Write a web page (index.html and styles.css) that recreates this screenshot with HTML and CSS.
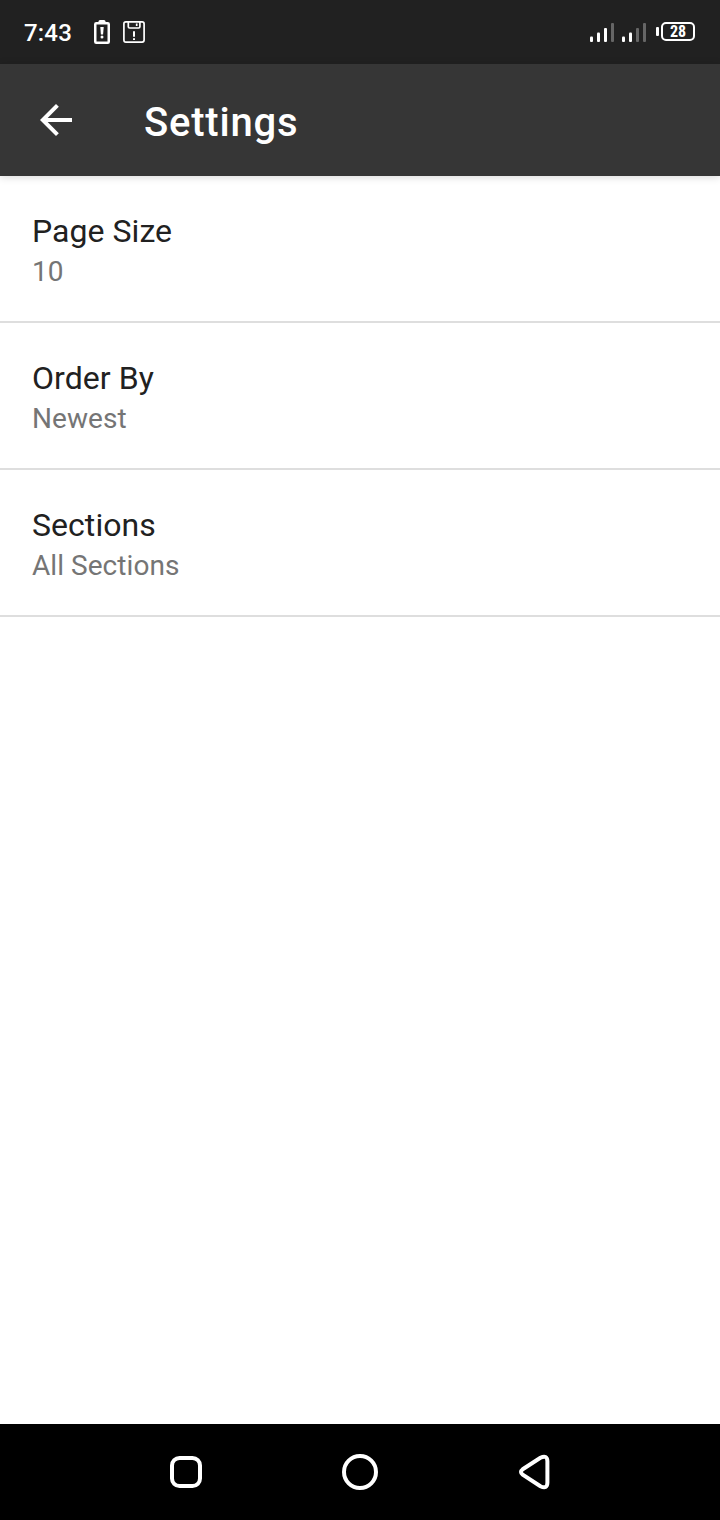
FILE: index.html
```html
<!DOCTYPE html>
<html lang="en">
<head>
<meta charset="utf-8">
<title>Settings</title>
<link rel="stylesheet" href="styles.css">
</head>
<body>
<div class="screen">
  <div class="status-bar">
    <span class="clock">7:43</span>
    <svg class="battery-alert" width="16" height="24" viewBox="0 0 16 24" fill="none">
      <rect x="1.250" y="3.250" width="13.500" height="19.500" rx="1" stroke="#fff" stroke-width="2.500"/>
      <path d="M4.500 3V1.500Q4.500 0 6 0h4Q11.500 0 11.500 1.500V3z" fill="#fff"/>
      <path d="M6.300 7h3.400l-.6 7.500h-2.200z" fill="#fff"/>
      <circle cx="8" cy="17" r="1.500" fill="#fff"/>
    </svg>
    <svg class="disk-alert" width="22" height="22" viewBox="0 0 22 22" fill="none" stroke="#fff" stroke-width="1.700">
      <rect x=".9" y=".9" width="20.200" height="20.200" rx="2"/>
      <path d="M5.300 1v4.700q0 1.300 1.300 1.300h9q1.300 0 1.300-1.300V1M13.700 2.600v2.400"/>
      <path d="M11 10.300v5.400M11 17.300v1.700" stroke-width="2"/>
    </svg>
    <svg class="signal" width="24" height="20" viewBox="0 0 24 20" fill="#fff">
      <rect x="0" y="14.500" width="3" height="5.500" rx="1"/>
      <rect x="7" y="10.500" width="3" height="9.500" rx="1"/>
      <rect x="14" y="6" width="3" height="14" rx="1"/>
      <rect x="21" y="1" width="3" height="19" rx="1" fill="#666"/>
    </svg>
    <svg class="signal signal-second" width="24" height="20" viewBox="0 0 24 20" fill="#fff">
      <rect x="0" y="14.500" width="3" height="5.500" rx="1"/>
      <rect x="7" y="10.500" width="3" height="9.500" rx="1"/>
      <rect x="14" y="6" width="3" height="14" rx="1" fill="#666"/>
      <rect x="21" y="1" width="3" height="19" rx="1" fill="#666"/>
    </svg>
    <div class="battery"><span class="battery-tip"></span><span class="battery-level">28</span></div>
  </div>
  <header class="app-bar">
    <svg width="48" height="48" viewBox="0 0 24 24" fill="#fff"><path d="M20 11H7.830l5.590-5.590L12 4l-8 8 8 8 1.410-1.410L7.830 13H20v-2z"/></svg>
    <h1 class="title">Settings</h1>
  </header>
  <main class="settings">
    <div class="setting"><div class="setting-name">Page Size</div><div class="setting-value">10</div></div>
    <div class="setting"><div class="setting-name">Order By</div><div class="setting-value">Newest</div></div>
    <div class="setting"><div class="setting-name">Sections</div><div class="setting-value">All Sections</div></div>
  </main>
  <nav class="nav-bar">
    <svg width="36" height="36" viewBox="0 0 36 36"><rect x="4" y="4" width="28" height="28" rx="7.500"/></svg>
    <svg width="36" height="36" viewBox="0 0 36 36"><circle cx="18" cy="18" r="16"/></svg>
    <svg width="36" height="36" viewBox="0 0 36 36"><path d="M6.700 15.300 24.400 3.800Q31.200 .5 31.400 7.200V28.800Q31.200 35.500 24.400 32.200L6.700 20.700Q3.300 18 6.700 15.300z"/></svg>
  </nav>
</div>
</body>
</html>
```
FILE: styles.css
```css
body {
  margin: 0;
  font-family: Roboto, sans-serif;
}

.screen {
  display: flex;
  flex-direction: column;
  width: 720px;
  height: 1520px;
  background: #fff;
}

.status-bar {
  display: flex;
  align-items: center;
  box-sizing: border-box;
  height: 64px;
  padding: 0 25px 0 24px;
  background: #212121;
  color: #fff;
}

.clock {
  width: 70px;
  padding-top: 2px;
  font-size: 24px;
  line-height: 28px;
  font-weight: 500;
  letter-spacing: 0.2px;
}

.disk-alert {
  margin-left: 13px;
}

.signal {
  margin: 0 0 0 auto;
}

.signal-second {
  margin-left: 8px;
}

.battery {
  display: flex;
  align-items: center;
  margin: 0 0 1px 10px;
}

.battery-tip {
  width: 3px;
  height: 9px;
  margin-right: 2px;
  border-radius: 1px;
  background: #fff;
}

.battery-level {
  box-sizing: border-box;
  width: 34px;
  height: 19px;
  border: 2px solid #fff;
  border-radius: 5px;
  font: 700 16px/15px "Roboto Condensed", Roboto, sans-serif;
  text-align: center;
}

.app-bar {
  display: flex;
  align-items: center;
  box-sizing: border-box;
  height: 112px;
  padding-left: 32px;
  background: #363636;
  color: #fff;
  box-shadow: 0 1px 8px rgba(0, 0, 0, 0.16);
}

.title {
  margin: 6px 0 0 64px;
  font-size: 40px;
  line-height: 48px;
  font-weight: 500;
  letter-spacing: 0.8px;
}

.settings {
  flex: 1;
}

.setting {
  box-sizing: border-box;
  height: 147px;
  padding: 36px 32px 0;
  border-bottom: 2px solid #dedede;
}

.setting-name {
  color: #212121;
  font-size: 32px;
  line-height: 38px;
  letter-spacing: 0.05px;
}

.setting-value {
  margin-top: 5px;
  color: #757575;
  font-size: 28px;
  line-height: 34px;
  letter-spacing: 0.05px;
}

.nav-bar {
  display: flex;
  align-items: center;
  gap: 138px;
  box-sizing: border-box;
  height: 96px;
  padding-left: 168px;
  background: #000;
}

.nav-bar svg {
  fill: none;
  stroke: #fff;
  stroke-width: 4;
}
```
